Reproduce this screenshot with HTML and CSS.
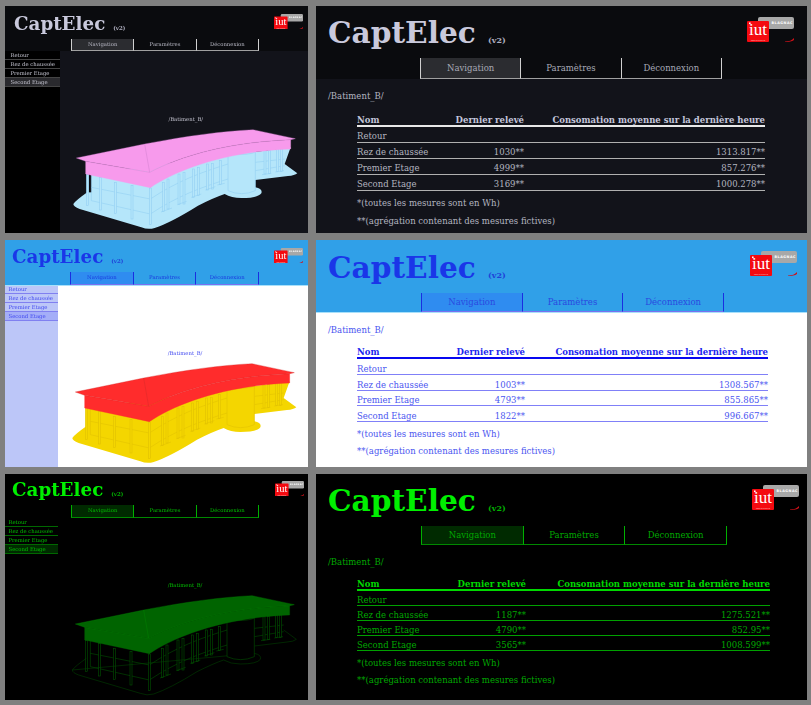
FILE: index.html
```html
<!DOCTYPE html>
<html lang="fr">
<head>
<meta charset="utf-8">
<title>CaptElec</title>
<link rel="stylesheet" href="styles.css">
</head>
<body>
<svg class="defs" aria-hidden="true">
  <symbol id="building" viewBox="215 385 675 306">
    <path class="wall" d="M216 610Q225 598 258 575L258 520L868 440L850 490L888 518Q880 525 860 526L762 538L762 560Q785 565 780 578Q770 592 720 592Q690 592 670 580Q640 590 590 615Q510 665 460 682Q440 688 420 680L235 625Q216 618 216 610Z"/>
    <rect class="gap" x="262" y="520" width="8" height="55"/>
    <path class="ln" d="M270 560L447 595C530 540 600 515 680 490M270 600L447 640C530 585 600 560 680 535M762 485L850 475M762 510L850 495M270 520L270 600M447 560L447 672"/>
    <g class="pil">
      <rect x="255" y="522" width="7" height="93"/><rect x="295" y="530" width="6" height="98"/>
      <rect x="339" y="545" width="6" height="93"/><rect x="389" y="555" width="6" height="100"/>
      <rect x="444" y="562" width="6" height="110"/><rect x="484" y="545" width="6" height="87"/>
      <rect x="497" y="535" width="6" height="90"/><rect x="530" y="520" width="6" height="92"/>
      <rect x="545" y="515" width="6" height="95"/><rect x="573" y="505" width="6" height="85"/>
      <rect x="588" y="500" width="6" height="85"/><rect x="616" y="490" width="6" height="78"/>
      <rect x="630" y="488" width="6" height="77"/><rect x="655" y="480" width="6" height="72"/>
      <rect x="788" y="450" width="6" height="70"/><rect x="801" y="450" width="6" height="68"/>
      <rect x="826" y="445" width="6" height="67"/><rect x="838" y="445" width="6" height="67"/>
    </g>
    <path class="ln" d="M479 634L512 622M528 612L556 602M570 590L600 580M612 568L642 558M648 553L670 548M782 522L810 518M822 514L848 510"/>
    <path class="base-ln" d="M216 610Q225 598 258 575M850 490L888 518Q880 525 860 526L762 538M762 560Q785 565 780 578Q770 592 720 592Q690 592 670 580Q640 590 590 615Q510 665 460 682Q440 688 420 680L235 625Q216 618 216 610Z"/>
    <path class="cyl" d="M680 452V570Q700 579 721 579Q742 579 762 570V452Z"/>
    <ellipse class="cyl" cx="721" cy="452" rx="41" ry="9"/>
    <path class="fascia" d="M253 482L445 515C540 465 680 425 868 417V445C680 452 530 505 447 561L253 520Z"/>
    <path class="roof" d="M225 472L430 430C560 405 660 392 755 387L882 414L868 417C680 425 540 465 445 515L253 482Z"/>
    <path class="roof-ln" d="M430 430L445 515"/>
  </symbol>
  <symbol id="logo-art" viewBox="0 0 47 25">
    <rect x="11" y="0" width="36" height="12" rx="2" fill="#a8a8a8"/>
    <path d="M38 24.5Q44 24.5 47 21V23Q44 25 38 25Z" fill="#d01018"/>
    <rect x="0" y="4" width="22" height="21" rx="1" fill="#f40a10"/>
    <rect x="2" y="5.5" width="1.6" height="1.6" fill="#fff"/>
  </symbol>
</svg>

<main class="sheet">

<section class="panel small dark">
  <header class="head">
    <svg class="logo" viewBox="0 0 47 25"><use href="#logo-art"/><text class="logo-blagnac" x="24.5" y="7.2" textLength="21">BLAGNAC</text><text class="logo-iut" x="11" y="18">iut</text><text class="logo-sub" x="11" y="23.9">Midi-Pyrénées</text></svg>
    <h1 class="title">CaptElec <span class="ver">(v2)</span></h1>
    <nav class="tabs"><a class="tab on">Navigation</a><a class="tab">Paramètres</a><a class="tab">Déconnexion</a></nav>
  </header>
  <div class="split">
    <ul class="side"><li>Retour</li><li>Rez de chaussée</li><li>Premier Etage</li><li class="on">Second Etage</li></ul>
    <div class="view"><p class="path">/Batiment_B/</p><svg class="bld"><use href="#building"/></svg></div>
  </div>
</section>

<section class="panel large dark">
  <header class="head">
    <svg class="logo" viewBox="0 0 47 25"><use href="#logo-art"/><text class="logo-blagnac" x="24.5" y="7.2" textLength="21">BLAGNAC</text><text class="logo-iut" x="11" y="18">iut</text><text class="logo-sub" x="11" y="23.9">Midi-Pyrénées</text></svg>
    <h1 class="title">CaptElec <span class="ver">(v2)</span></h1>
    <nav class="tabs"><a class="tab on">Navigation</a><a class="tab">Paramètres</a><a class="tab">Déconnexion</a></nav>
  </header>
  <div class="body">
    <p class="path">/Batiment_B/</p>
    <table class="data">
      <thead><tr><th class="c1">Nom</th><th class="c2">Dernier relevé</th><th class="c3">Consomation moyenne sur la dernière heure</th></tr></thead>
      <tbody>
        <tr><td>Retour</td><td></td><td></td></tr>
        <tr><td>Rez de chaussée</td><td>1030**</td><td>1313.817**</td></tr>
        <tr><td>Premier Etage</td><td>4999**</td><td>857.276**</td></tr>
        <tr><td>Second Etage</td><td>3169**</td><td>1000.278**</td></tr>
      </tbody>
    </table>
    <p class="note">*(toutes les mesures sont en Wh)</p>
    <p class="note">**(agrégation contenant des mesures fictives)</p>
  </div>
</section>

<section class="panel small blue">
  <header class="head">
    <svg class="logo" viewBox="0 0 47 25"><use href="#logo-art"/><text class="logo-blagnac" x="24.5" y="7.2" textLength="21">BLAGNAC</text><text class="logo-iut" x="11" y="18">iut</text><text class="logo-sub" x="11" y="23.9">Midi-Pyrénées</text></svg>
    <h1 class="title">CaptElec <span class="ver">(v2)</span></h1>
    <nav class="tabs"><a class="tab on">Navigation</a><a class="tab">Paramètres</a><a class="tab">Déconnexion</a></nav>
  </header>
  <div class="split">
    <ul class="side"><li>Retour</li><li>Rez de chaussée</li><li>Premier Etage</li><li class="on">Second Etage</li></ul>
    <div class="view"><p class="path">/Batiment_B/</p><svg class="bld"><use href="#building"/></svg></div>
  </div>
</section>

<section class="panel large blue">
  <header class="head">
    <svg class="logo" viewBox="0 0 47 25"><use href="#logo-art"/><text class="logo-blagnac" x="24.5" y="7.2" textLength="21">BLAGNAC</text><text class="logo-iut" x="11" y="18">iut</text><text class="logo-sub" x="11" y="23.9">Midi-Pyrénées</text></svg>
    <h1 class="title">CaptElec <span class="ver">(v2)</span></h1>
    <nav class="tabs"><a class="tab on">Navigation</a><a class="tab">Paramètres</a><a class="tab">Déconnexion</a></nav>
  </header>
  <div class="body">
    <p class="path">/Batiment_B/</p>
    <table class="data">
      <thead><tr><th class="c1">Nom</th><th class="c2">Dernier relevé</th><th class="c3">Consomation moyenne sur la dernière heure</th></tr></thead>
      <tbody>
        <tr><td>Retour</td><td></td><td></td></tr>
        <tr><td>Rez de chaussée</td><td>1003**</td><td>1308.567**</td></tr>
        <tr><td>Premier Etage</td><td>4793**</td><td>855.865**</td></tr>
        <tr><td>Second Etage</td><td>1822**</td><td>996.667**</td></tr>
      </tbody>
    </table>
    <p class="note">*(toutes les mesures sont en Wh)</p>
    <p class="note">**(agrégation contenant des mesures fictives)</p>
  </div>
</section>

<section class="panel small green">
  <header class="head">
    <svg class="logo" viewBox="0 0 47 25"><use href="#logo-art"/><text class="logo-blagnac" x="24.5" y="7.2" textLength="21">BLAGNAC</text><text class="logo-iut" x="11" y="18">iut</text><text class="logo-sub" x="11" y="23.9">Midi-Pyrénées</text></svg>
    <h1 class="title">CaptElec <span class="ver">(v2)</span></h1>
    <nav class="tabs"><a class="tab on">Navigation</a><a class="tab">Paramètres</a><a class="tab">Déconnexion</a></nav>
  </header>
  <div class="split">
    <ul class="side"><li>Retour</li><li>Rez de chaussée</li><li>Premier Etage</li><li class="on">Second Etage</li></ul>
    <div class="view"><p class="path">/Batiment_B/</p><svg class="bld"><use href="#building"/></svg></div>
  </div>
</section>

<section class="panel large green">
  <header class="head">
    <svg class="logo" viewBox="0 0 47 25"><use href="#logo-art"/><text class="logo-blagnac" x="24.5" y="7.2" textLength="21">BLAGNAC</text><text class="logo-iut" x="11" y="18">iut</text><text class="logo-sub" x="11" y="23.9">Midi-Pyrénées</text></svg>
    <h1 class="title">CaptElec <span class="ver">(v2)</span></h1>
    <nav class="tabs"><a class="tab on">Navigation</a><a class="tab">Paramètres</a><a class="tab">Déconnexion</a></nav>
  </header>
  <div class="body">
    <p class="path">/Batiment_B/</p>
    <table class="data">
      <thead><tr><th class="c1">Nom</th><th class="c2">Dernier relevé</th><th class="c3">Consomation moyenne sur la dernière heure</th></tr></thead>
      <tbody>
        <tr><td>Retour</td><td></td><td></td></tr>
        <tr><td>Rez de chaussée</td><td>1187**</td><td>1275.521**</td></tr>
        <tr><td>Premier Etage</td><td>4790**</td><td>852.95**</td></tr>
        <tr><td>Second Etage</td><td>3565**</td><td>1008.599**</td></tr>
      </tbody>
    </table>
    <p class="note">*(toutes les mesures sont en Wh)</p>
    <p class="note">**(agrégation contenant des mesures fictives)</p>
  </div>
</section>

</main>
</body>
</html>
```

FILE: styles.css
```css
* { box-sizing: border-box; }
html, body { margin: 0; height: 100%; }
body { background: #808080; font-family: "DejaVu Serif", serif; overflow: hidden; }
.defs { position: absolute; width: 0; height: 0; }

.sheet {
  display: grid;
  grid-template-columns: 303px 491px;
  grid-template-rows: 227px 227px 226px;
  column-gap: 8px;
  row-gap: 7px;
  padding: 6px 0 0 5px;
}

/* themes */
.dark {
  --head: #0a0b0e; --main: #12131a; --title: #c9c9dc; --ver: #b0b0c0;
  --text: #b4b6c0; --tab-text: #a8aab6; --tab-on: #2b2c30; --tab-edge: #d0d0d0; --tab-low: #a0a0a0;
  --side: #000; --side-on: #2a2a2e; --side-line: #444; --side-text: #c4c4d0; --head-line: transparent;
  --th: #c4c6dc; --rule: #e8e8e8; --row: #b0b0b0; --tiny: #c4c4d0; --tiny-tab: #b8b8c4;
  --wall: #b5e6fa; --wall-ln: #90cdf2; --gap: #0a0a10; --roof: #f79aec; --roof-ln: #c878c8; --base-ln: none;
}
.blue {
  --head: #30a0e8; --main: #fff; --title: #1a36e8; --ver: #2040d8;
  --text: #4a55f0; --tab-text: #2a48e0; --tab-on: #2f8cf0; --tab-edge: #1a2ee0; --tab-low: #7a70f0;
  --side: #bcc6f8; --side-on: #a4aef8; --side-line: #8080f0; --side-text: #4048f0; --head-line: #a8e0fa;
  --th: #1a26ee; --rule: #0808f0; --row: #8080f8; --tiny: #4048f0; --tiny-tab: #1a38e0;
  --wall: #f4d600; --wall-ln: #e0c000; --gap: #f4d600; --roof: #ff2c2c; --roof-ln: #d02828; --base-ln: none;
}
.green {
  --head: #000; --main: #000; --title: #00f000; --ver: #00b000;
  --text: #00a800; --tab-text: #00a800; --tab-on: #002a00; --tab-edge: #00b000; --tab-low: #008800;
  --side: #000; --side-on: #002a00; --side-line: #006800; --side-text: #00c000; --head-line: transparent;
  --th: #00d800; --rule: #00d800; --row: #00a000; --tiny: #00c000; --tiny-tab: #00c000;
  --wall: #000; --wall-ln: #005a00; --gap: #000; --roof: #006400; --roof-ln: #008800; --base-ln: #004800;
}

.panel { position: relative; background: var(--main); color: var(--text); display: flex; flex-direction: column; overflow: hidden; min-width: 0; }
.head { position: relative; background: var(--head); box-shadow: 0 1px 0 var(--head-line); display: flex; flex-direction: column; flex: none; }
.title { margin: 0; color: var(--title); font-weight: 700; line-height: 1; white-space: nowrap; flex: none; }
.ver { color: var(--ver); }
.logo { position: absolute; }
.logo-blagnac { font: 700 3.4px "DejaVu Sans", sans-serif; fill: #fff; }
.logo-iut { font: 400 17px "Liberation Serif", serif; fill: #fff; text-anchor: middle; }
.logo-sub { font: 400 2.2px "Liberation Sans", sans-serif; fill: #ffd0d0; text-anchor: middle; }

.tabs { display: flex; flex: none; }
.tab { flex: 1 1 0; text-align: center; color: var(--tab-text); border-right: 1px solid var(--tab-edge); border-bottom: 1px solid var(--tab-low); }
.tab:first-child { border-left: 1px solid var(--tab-edge); }
.tab.on { background: var(--tab-on); }

/* small variant */
.small { filter: blur(.25px); }
.small .head { height: 45px; }
.small .title { font-size: 18.3px; padding: 9px 0 0 9px; height: 33px; }
.small .ver { font-size: 5.5px; margin-left: 1.5px; }
.small .logo { width: 29px; height: 15.5px; right: 5px; top: 7.5px; }
.small .tabs { width: 188px; margin: 0 0 0 66px; height: 12px; font-size: 5.3px; line-height: 11px; }
.small .tab { color: var(--tiny-tab); }
.small.blue .head { height: 44.5px; }
.small.blue .title { padding: 8px 0 0 7px; height: 32px; }
.small.blue .tabs { width: 189px; margin-left: 65px; height: 12.5px; }
.small.green .head { height: 44px; }
.small.green .title { padding: 7px 0 0 7px; height: 31px; }
.small.green .tabs { height: 13px; }
.small.green .logo { right: 4px; top: 6.5px; }
.split { flex: 1; display: flex; }
.side { list-style: none; margin: 0; padding: 0; width: 54.5px; background: var(--side); font-size: 5.3px; flex: none; }
.blue .side, .green .side { width: 53px; }
.side li { height: 9px; line-height: 8.4px; padding-left: 5.5px; border-bottom: 1px solid var(--side-line); white-space: nowrap; color: var(--side-text); }
.blue .side li, .green .side li { padding-left: 3.5px; }
.side li.on { background: var(--side-on); }
.view { flex: 1; min-width: 0; text-align: center; }
.view .path { margin: 0; padding: 65px 0 0 4px; height: 78px; font-size: 5.3px; line-height: 7px; color: var(--tiny); }
.green .view .path { padding-top: 64px; height: 77px; }
.bld { display: block; width: 225px; height: 102px; margin-left: 13px; }
.blue .bld, .green .bld { margin-left: 14px; }

.wall { fill: var(--wall); }
.gap { fill: var(--gap); }
.ln { fill: none; stroke: var(--wall-ln); stroke-width: 1.6; }
.pil rect { fill: var(--wall); stroke: var(--wall-ln); stroke-width: 1.6; }
.base-ln { fill: none; stroke: var(--base-ln); stroke-width: 1.6; }
.cyl { fill: var(--wall); stroke: var(--wall-ln); stroke-width: 1.6; }
.fascia { fill: var(--roof); stroke: var(--roof); stroke-width: 1; }
.roof { fill: var(--roof); stroke: var(--roof-ln); stroke-width: 1; }
.roof-ln { fill: none; stroke: var(--roof-ln); stroke-width: 1.2; }

/* large variant */
.large .head { height: 73px; }
.large .title { font-size: 29.6px; padding: 12px 0 0 12px; height: 52px; }
.large .ver { font-size: 8px; margin-left: 2px; }
.large .logo { width: 47px; height: 25px; right: 13px; top: 11px; }
.large .tabs { width: 302px; margin-left: 104px; height: 21px; font-size: 8.5px; line-height: 20px; }
.body { flex: 1; padding: 11px 0 0 12px; font-size: 8.5px; }
.body .path { margin: 0 0 12px; line-height: 12px; }
.data { width: 408px; margin: 0 0 0 29px; border-collapse: collapse; table-layout: fixed; }
.data th { font-weight: 700; color: var(--th); height: 12px; line-height: 10px; padding: 0; border-bottom: 2px solid var(--rule); text-align: right; white-space: nowrap; }
.data td { height: 16px; padding: 4px 0 0; line-height: 11px; text-align: right; border-bottom: 1px solid var(--row); white-space: nowrap; }
.data .c1, .data td:first-child { text-align: left; }
.c1 { width: 60px; }
.c2 { width: 107px; }
.c3 { width: 241px; }
.note { margin: 6px 0 0 29px; line-height: 12px; height: 12px; }
.note + .note { margin-top: 6px; }

.large.blue .head { height: 72px; }
.large.blue .title { padding-top: 13px; height: 52.5px; }
.large.blue .body .path { margin-bottom: 10px; }
.large.blue .body { padding-top: 12px; }
.large.blue .data { width: 411px; }
.large.blue .c2 { width: 108px; }
.large.blue .c3 { width: 243px; }
.large.blue .logo { right: 10px; }
.large.blue .tabs { width: 303px; margin-left: 105px; height: 19.5px; line-height: 18.5px; }
.large.blue .data td { height: 15.4px; padding-top: 4.4px; line-height: 10px; }
.large.blue .data tbody tr:first-child td { height: 16.4px; padding-top: 5.4px; }
.large.blue .note + .note { margin-top: 5px; }
.large.green .data { width: 413px; }
.large.green .c2 { width: 109px; }
.large.green .c3 { width: 244px; }
.large.green .logo { right: 8px; top: 11px; }
.large.green .tabs { width: 306px; margin-left: 105px; height: 19px; line-height: 18px; }
.large.green .head { height: 71px; }
.large.green .body .path { margin-bottom: 10px; }
.large.green .data td { height: 15px; padding-top: 4px; line-height: 10px; }
.large.green .note + .note { margin-top: 5px; }
```
